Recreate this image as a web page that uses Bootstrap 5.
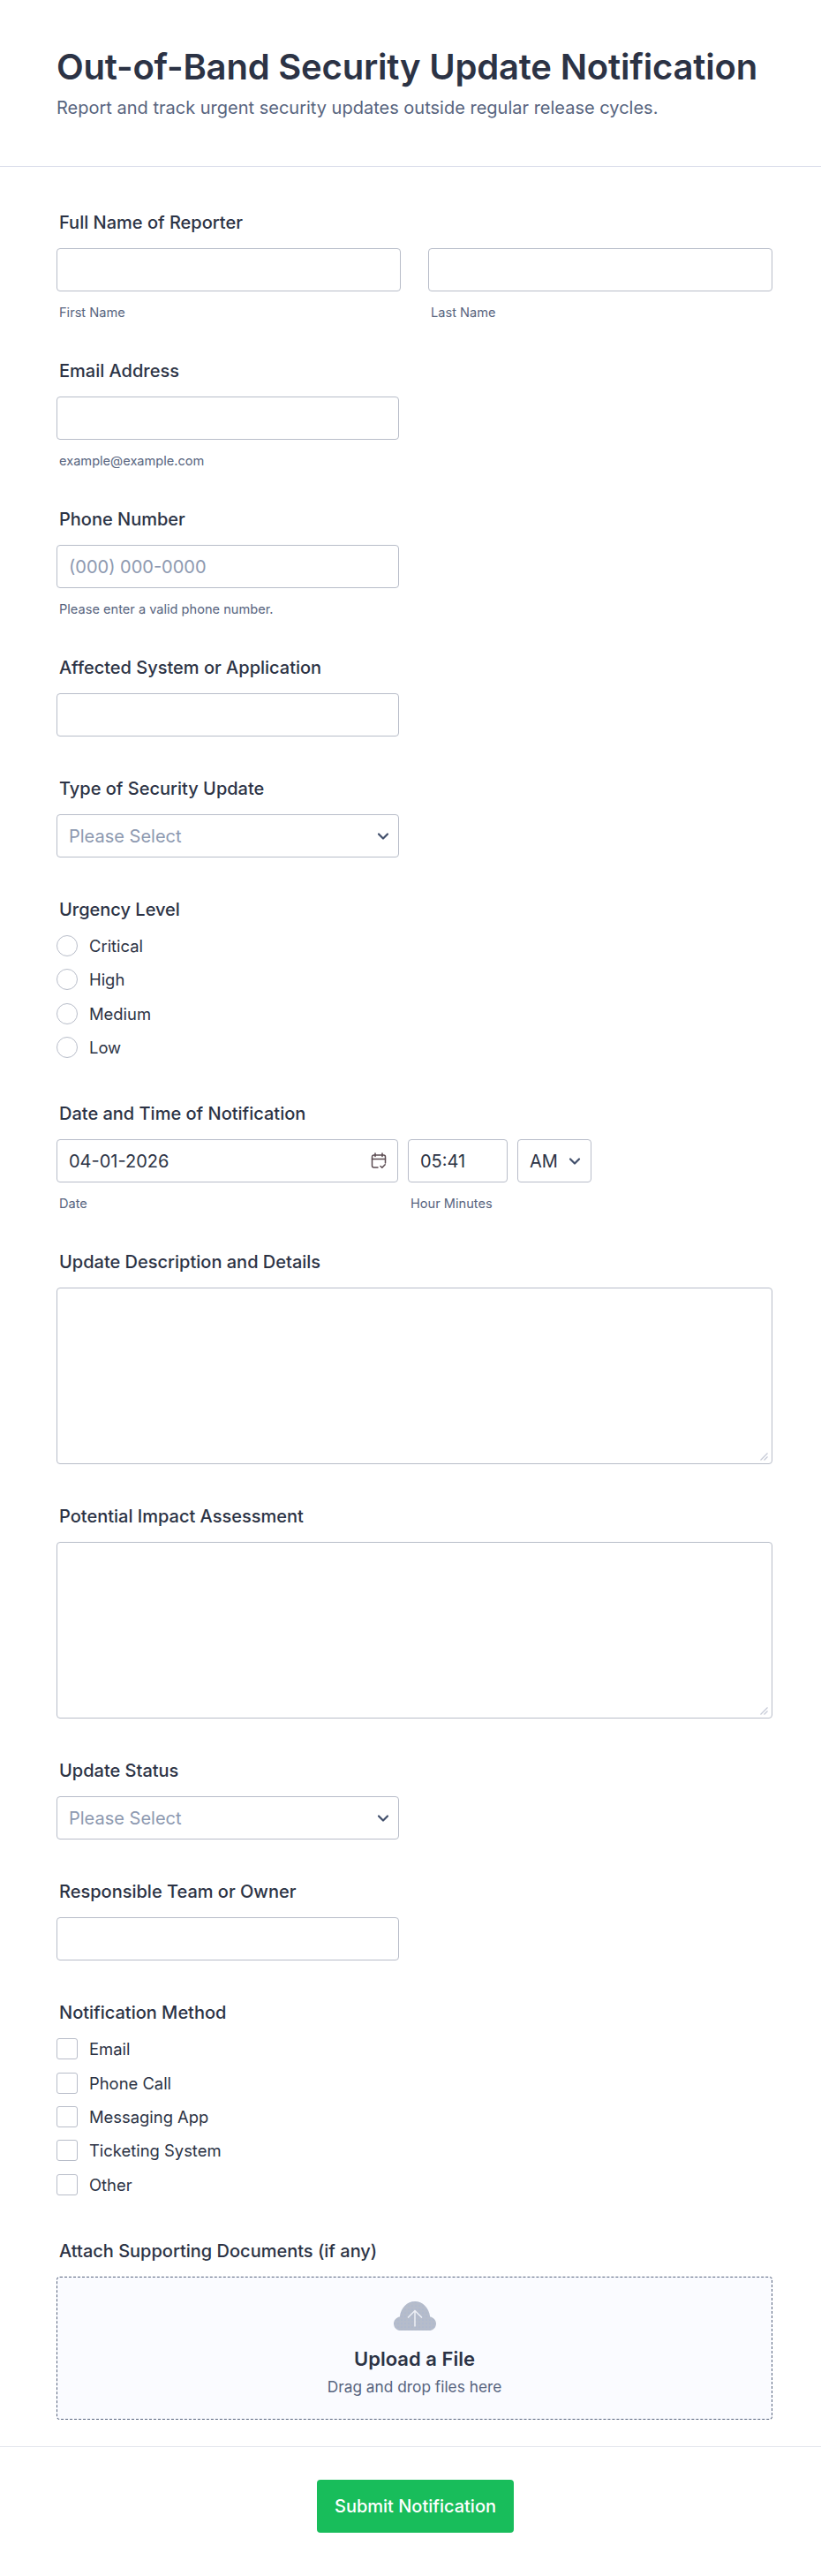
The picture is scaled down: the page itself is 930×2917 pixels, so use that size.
<!DOCTYPE html>
<html lang="en">
<head>
    <meta charset="UTF-8">
    <meta name="viewport" content="width=device-width, initial-scale=1.0">
    <title>Out-of-Band Security Update Notification</title>
    <link href="https://cdn.jsdelivr.net/npm/bootstrap@5.3.0/dist/css/bootstrap.min.css" rel="stylesheet">
    <script src="https://cdn.jsdelivr.net/npm/bootstrap@5.3.0/dist/js/bootstrap.bundle.min.js"></script>
    <style>
        body {
            font-family: Inter, "Liberation Sans", sans-serif;
            color: #2c3345;
            background: #fff;
        }
        .form-head {
            padding: 52px 64px 52px;
            border-bottom: 1px solid #dcdfeb;
            height: 189px;
        }
        .form-head h1 {
            font-size: 40px;
            line-height: 48px;
            font-weight: 600;
            letter-spacing: -.2px;
            margin: 0 0 8px;
            color: #2c3345;
        }
        .form-head p {
            font-size: 20px;
            line-height: 28px;
            margin: 0;
            color: #57647e;
        }
        .form-body {
            padding: 52px 55px 0 64px;
        }
        .fld {
            margin-bottom: 48px;
        }
        .fld-label {
            display: block;
            font-size: 20px;
            line-height: 22px;
            font-weight: 500;
            margin: 0 0 18px 3px;
            color: #2c3345;
        }
        .form-control, .form-select {
            height: 49px;
            border: 1px solid #b8bdc9;
            border-radius: 4px;
            font-size: 20px;
            color: #2c3345;
            padding: 0 13px;
            box-shadow: none;
        }
        .form-control::placeholder { color: #8d99b0; }
        .form-select {
            color: #8d99b0;
            background-size: 16px 16px;
            background-position: right 9px center;
            background-image: url("data:image/svg+xml,%3csvg xmlns='http://www.w3.org/2000/svg' viewBox='0 0 16 16'%3e%3cpath fill='none' stroke='%23414f6b' stroke-linecap='round' stroke-linejoin='round' stroke-width='2.2' d='m3 5.500 5 5 5-5'/%3e%3c/svg%3e");
        }
        .wide-half { width: 388px; }
        .name-gap { gap: 31px; width: 811px; }
        .name-gap > div { flex: 1 1 0; }
        .sub-label {
            display: block;
            font-size: 14.600px;
            line-height: 18px;
            height: 16px;
            margin: 15px 0 0 3px;
            color: #57647e;
        }
        .choice-list {
            display: flex;
            flex-direction: column;
            gap: 14.400px;
            padding-bottom: 4px;
        }
        .choice {
            display: flex;
            align-items: center;
            gap: 13px;
            font-size: 18.400px;
            line-height: 24px;
            color: #2c3345;
        }
        .choice .form-check-input {
            width: 24px;
            height: 24px;
            margin: 0;
            flex: none;
            border: 1px solid #b8bdc9;
        }
        .choice .form-check-input[type=checkbox] { border-radius: 3px; }
        .date-wrap { position: relative; width: 387px; }
        .date-icon { position: absolute; right: 13px; top: 15px; }
        .time-box { width: 113px; margin-left: 11px; }
        .ampm-box { width: 84px; margin-left: 11px; }
        .ampm-box .form-select { color: #2c3345; background-position: right 10px center; }
        .area-wrap { position: relative; width: 811px; }
        .big-area.form-control { height: 200px; padding: 10px 13px; resize: none; }
        .area-grip { position: absolute; right: 5px; bottom: 4px; }
        .drop-zone {
            width: 811px;
            height: 162px;
            border: 1px dashed #57647e;
            border-radius: 4px;
            background: #fafbff;
            padding-top: 27px;
            text-align: center;
        }
        .drop-zone svg { display: block; margin: 0 auto 20px; }
        .drop-title { font-size: 22px; line-height: 24px; font-weight: 600; color: #2c3345; }
        .drop-sub { font-size: 17.300px; line-height: 20px; margin-top: 10px; color: #57647e; }
        .form-foot {
            border-top: 1px solid #e3e5ec;
            padding: 37px 0 0 11px;
            margin-top: 30px;
            text-align: center;
        }
        .btn-send.btn {
            width: 223px;
            height: 60px;
            background: #18bd5b;
            border: 0;
            border-radius: 4px;
            color: #fff;
            font-size: 20px;
            font-weight: 500;
        }
    </style>
</head>
<body>
    <header class="form-head">
        <h1>Out-of-Band Security Update Notification</h1>
        <p>Report and track urgent security updates outside regular release cycles.</p>
    </header>

    <form class="form-body">
        <div class="fld">
            <label class="fld-label">Full Name of Reporter</label>
            <div class="d-flex name-gap">
                <div><input type="text" class="form-control"><span class="sub-label">First Name</span></div>
                <div><input type="text" class="form-control"><span class="sub-label">Last Name</span></div>
            </div>
        </div>

        <div class="fld">
            <label class="fld-label">Email Address</label>
            <div class="wide-half"><input type="text" class="form-control"><span class="sub-label">example@example.com</span></div>
        </div>

        <div class="fld">
            <label class="fld-label">Phone Number</label>
            <div class="wide-half"><input type="text" class="form-control" placeholder="(000) 000-0000"><span class="sub-label">Please enter a valid phone number.</span></div>
        </div>

        <div class="fld">
            <label class="fld-label">Affected System or Application</label>
            <div class="wide-half"><input type="text" class="form-control"></div>
        </div>

        <div class="fld">
            <label class="fld-label">Type of Security Update</label>
            <div class="wide-half"><select class="form-select"><option>Please Select</option></select></div>
        </div>

        <div class="fld">
            <label class="fld-label">Urgency Level</label>
            <div class="choice-list">
                <label class="choice"><input type="radio" class="form-check-input" name="urgency">Critical</label>
                <label class="choice"><input type="radio" class="form-check-input" name="urgency">High</label>
                <label class="choice"><input type="radio" class="form-check-input" name="urgency">Medium</label>
                <label class="choice"><input type="radio" class="form-check-input" name="urgency">Low</label>
            </div>
        </div>

        <div class="fld">
            <label class="fld-label">Date and Time of Notification</label>
            <div class="d-flex">
                <div>
                    <div class="date-wrap">
                        <input type="text" class="form-control" value="04-01-2026">
                        <svg class="date-icon" width="18" height="19" viewBox="0 0 18 19" fill="none" stroke="#5a4a50" stroke-width="1.500" stroke-linecap="round" stroke-linejoin="round">
                            <path d="M8 17H3.500A2 2 0 0 1 1.500 15V5a2 2 0 0 1 2-2h11a2 2 0 0 1 2 2v7"/>
                            <path d="M1.500 7.500h15M5 1v3.500M13 1v3.500"/>
                            <path d="m11 15.500 1.800 1.800 3.400-3.600"/>
                        </svg>
                    </div>
                    <span class="sub-label">Date</span>
                </div>
                <div class="time-box">
                    <input type="text" class="form-control" value="05:41">
                    <span class="sub-label">Hour Minutes</span>
                </div>
                <div class="ampm-box"><select class="form-select"><option>AM</option></select></div>
            </div>
        </div>

        <div class="fld">
            <label class="fld-label">Update Description and Details</label>
            <div class="area-wrap">
                <textarea class="form-control big-area"></textarea>
                <svg class="area-grip" width="9" height="9" viewBox="0 0 9 9" fill="none" stroke="#c5c9d6" stroke-width="1.200"><path d="M0.500 8.500 8.500 .5M4.500 8.500l4-4"/></svg>
            </div>
        </div>

        <div class="fld">
            <label class="fld-label">Potential Impact Assessment</label>
            <div class="area-wrap">
                <textarea class="form-control big-area"></textarea>
                <svg class="area-grip" width="9" height="9" viewBox="0 0 9 9" fill="none" stroke="#c5c9d6" stroke-width="1.200"><path d="M0.500 8.500 8.500 .5M4.500 8.500l4-4"/></svg>
            </div>
        </div>

        <div class="fld">
            <label class="fld-label">Update Status</label>
            <div class="wide-half"><select class="form-select"><option>Please Select</option></select></div>
        </div>

        <div class="fld">
            <label class="fld-label">Responsible Team or Owner</label>
            <div class="wide-half"><input type="text" class="form-control"></div>
        </div>

        <div class="fld">
            <label class="fld-label">Notification Method</label>
            <div class="choice-list">
                <label class="choice"><input type="checkbox" class="form-check-input">Email</label>
                <label class="choice"><input type="checkbox" class="form-check-input">Phone Call</label>
                <label class="choice"><input type="checkbox" class="form-check-input">Messaging App</label>
                <label class="choice"><input type="checkbox" class="form-check-input">Ticketing System</label>
                <label class="choice"><input type="checkbox" class="form-check-input">Other</label>
            </div>
        </div>

        <div>
            <label class="fld-label">Attach Supporting Documents (if any)</label>
            <div class="drop-zone">
                <svg width="48" height="33" viewBox="0 0 48 33">
                    <defs>
                        <pattern id="cloudDots" width="4" height="4" patternUnits="userSpaceOnUse">
                            <rect width="4" height="4" fill="#b5bccb"/>
                            <circle cx="1" cy="1" r=".6" fill="#9fb2d6"/>
                        </pattern>
                    </defs>
                    <path fill="url(#cloudDots)" d="M8 33C3.400 33 0 29.600 0 25.200c0-4 2.900-7.200 6.800-7.800C8 7.400 15.200 0 24 0s16 7.400 17.200 17.400C45.100 18 48 21.200 48 25.200 48 29.600 44.600 33 40 33Z"/>
                    <path fill="none" stroke="#eef0f6" stroke-width="1.500" d="M24 28.500V10.500M16 18.500l8-8 8 8"/>
                </svg>
                <div class="drop-title">Upload a File</div>
                <div class="drop-sub">Drag and drop files here</div>
            </div>
        </div>
    </form>

    <footer class="form-foot">
        <button type="button" class="btn btn-send">Submit Notification</button>
    </footer>
</body>
</html>
